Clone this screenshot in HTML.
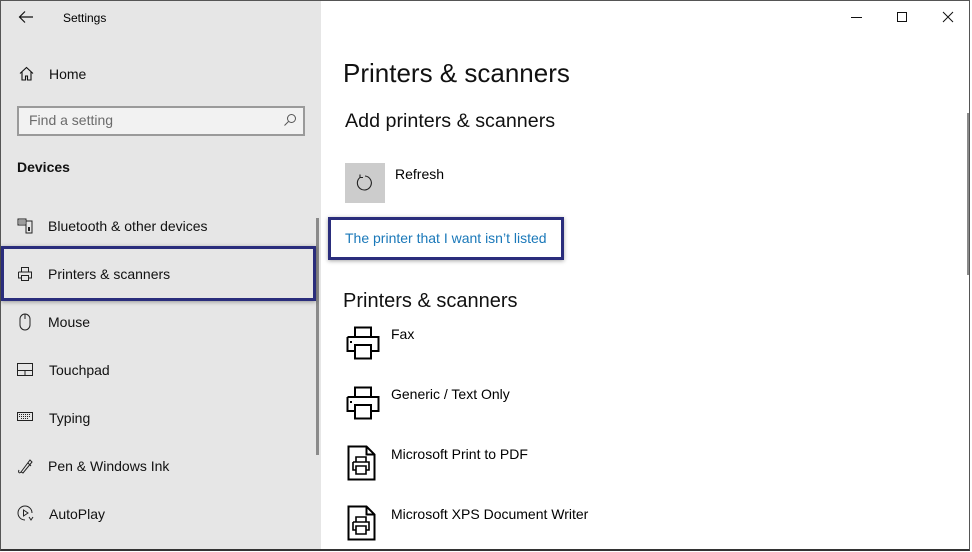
<!DOCTYPE html>
<html><head><style>
*{margin:0;padding:0;box-sizing:border-box}
body{width:972px;height:552px;overflow:hidden;background:#fff;font-family:"Liberation Sans",sans-serif;color:#000;position:relative}
.frame{position:absolute;left:0;top:0;width:970px;height:551px;border:1px solid #555;border-bottom:2px solid #333}
.side{position:absolute;left:1px;top:1px;width:320px;height:548px;background:#e6e6e6}
.t{position:absolute;white-space:nowrap}
.nav{font-size:14px;color:#111}
.box{position:absolute;border:3px solid #2a2d7c;box-shadow:0 1px 4px rgba(0,0,0,.35)}
svg{position:absolute}
</style></head><body>
<div class="side"></div>
<div class="frame"></div>
<svg style="left:18px;top:10px" width="16" height="14" viewBox="0 0 16 14"><path d="M15 7H2M7 1.5L1.5 7L7 12.5" stroke="#111" stroke-width="1.2" fill="none"/></svg>
<div class="t" style="left:63px;top:11px;font-size:12px">Settings</div>
<svg style="left:19px;top:66px" width="15" height="15" viewBox="0 0 15 15"><path d="M1 7.5L7.5 1.5L14 7.5M3 6v8h3.5v-4h2v4H12V6" stroke="#111" stroke-width="1.1" fill="none"/></svg>
<div class="t nav" style="left:49px;top:66px;font-size:14px">Home</div>
<div style="position:absolute;left:17px;top:106px;width:288px;height:30px;border:2px solid #9a9a9a;background:#f2f2f2"></div>
<div class="t" style="left:29px;top:112px;font-size:14px;color:#6b6b6b">Find a setting</div>
<svg style="left:283px;top:113px" width="14" height="14" viewBox="0 0 14 14"><circle cx="8.5" cy="5.5" r="4" stroke="#555" fill="none"/><path d="M5.5 8.5L1.5 12.5" stroke="#555"/></svg>
<div class="t" style="left:17px;top:159px;font-size:14px;font-weight:bold;color:#111">Devices</div>
<div style="position:absolute;left:316px;top:218px;width:3px;height:237px;background:#8a8a8a"></div>
<svg style="left:17px;top:218px" width="16" height="16" viewBox="0 0 16 16"><rect x="1" y="1" width="8" height="6" fill="none" stroke="#222"/><path d="M2 3h6M2 5h6" stroke="#222" stroke-width=".7"/><rect x="9" y="3" width="6" height="12" fill="none" stroke="#222"/><rect x="11" y="9" width="2" height="4" fill="#222"/></svg>
<div class="t nav" style="left:48px;top:218px">Bluetooth &amp; other devices</div>
<svg style="left:17px;top:266px" width="16" height="16" viewBox="0 0 16 16"><path d="M4.5 6V1.5h7V6M1.5 6h13v6h-3M4.5 12h-3V6M4.5 9.5h7v5h-7z" stroke="#222" fill="none"/></svg>
<div class="t nav" style="left:48px;top:266px">Printers &amp; scanners</div>
<div class="box" style="left:1px;top:246px;width:315px;height:55px"></div>
<svg style="left:18px;top:313px" width="14" height="18" viewBox="0 0 14 18"><rect x="2" y="1" width="10" height="16" rx="5" fill="none" stroke="#222"/><path d="M7 1v5" stroke="#222"/></svg>
<div class="t nav" style="left:48px;top:314px">Mouse</div>
<svg style="left:17px;top:363px" width="16" height="13" viewBox="0 0 16 13"><rect x=".5" y=".5" width="15" height="12" fill="none" stroke="#222"/><path d="M1 7.5h14M8 7.5v5" stroke="#222"/></svg>
<div class="t nav" style="left:49px;top:362px">Touchpad</div>
<svg style="left:17px;top:412px" width="16" height="9" viewBox="0 0 16 9"><rect x=".5" y=".5" width="15" height="8" fill="none" stroke="#222"/><path d="M2 2.5h12M2 4.5h12M4 6.5h8" stroke="#222" stroke-dasharray="1 1"/></svg>
<div class="t nav" style="left:49px;top:410px">Typing</div>
<svg style="left:17px;top:457px" width="17" height="18" viewBox="0 0 17 18"><path d="M4 15L13 3l2 2-9 11zM4 15c-2 2-3 0-2-2M11 6l3 3" stroke="#222" fill="none"/></svg>
<div class="t nav" style="left:48px;top:458px">Pen &amp; Windows Ink</div>
<svg style="left:17px;top:505px" width="17" height="17" viewBox="0 0 17 17"><path d="M8 15A7 7 0 1 1 15 8M12 12l2 3 2-3" stroke="#222" fill="none"/><path d="M6.5 5v6l4.5-3z" stroke="#222" fill="none"/></svg>
<div class="t nav" style="left:49px;top:506px">AutoPlay</div>
<div style="position:absolute;left:851px;top:17px;width:11px;height:1px;background:#111"></div>
<div style="position:absolute;left:897px;top:12px;width:10px;height:10px;border:1px solid #111"></div>
<svg style="left:942px;top:11px" width="12" height="12" viewBox="0 0 12 12"><path d="M1 1l10 10M11 1L1 11" stroke="#111"/></svg>
<div style="position:absolute;left:967px;top:113px;width:2px;height:162px;background:#8a8a8a"></div>
<div class="t" style="left:343px;top:58px;font-size:26px;color:#111">Printers &amp; scanners</div>
<div class="t" style="left:345px;top:110px;font-size:19.7px;color:#111">Add printers &amp; scanners</div>
<div style="position:absolute;left:345px;top:163px;width:40px;height:40px;background:#ccc"></div>
<svg style="left:356px;top:174px" width="18" height="18" viewBox="0 0 18 18"><path d="M4 3.5A7 7 0 1 0 9 2" stroke="#222" fill="none" stroke-width="1.1"/><path d="M4 3.5V0.5M4 3.5h3" stroke="#222" stroke-width="1.1"/></svg>
<div class="t" style="left:395px;top:166px;font-size:14px">Refresh</div>
<div class="box" style="left:328px;top:217px;width:236px;height:43px;background:#fff"></div>
<div class="t" style="left:345px;top:230px;font-size:14px;color:#1a78b9">The printer that I want isn’t listed</div>
<div class="t" style="left:343px;top:290px;font-size:20px;color:#111">Printers &amp; scanners</div>
<svg style="left:346px;top:326px" width="34" height="34" viewBox="0 0 34 34"><path d="M9 11V1.5h16V11M1.5 11h31v14h-7.5M9 25H1.5V11M9 19h16v13.5H9z" stroke="#000" stroke-width="2" fill="none"/><rect x="4" y="15" width="2" height="2"/></svg>
<div class="t" style="left:391px;top:326px;font-size:14px">Fax</div>
<svg style="left:346px;top:386px" width="34" height="34" viewBox="0 0 34 34"><path d="M9 11V1.5h16V11M1.5 11h31v14h-7.5M9 25H1.5V11M9 19h16v13.5H9z" stroke="#000" stroke-width="2" fill="none"/><rect x="4" y="15" width="2" height="2"/></svg>
<div class="t" style="left:391px;top:386px;font-size:14px">Generic / Text Only</div>
<svg style="left:347px;top:445px" width="30" height="36" viewBox="0 0 30 36"><path d="M1.5 1.5h18l8 8v25h-26z M19.5 1.5v8h8" stroke="#000" stroke-width="2" fill="none"/><path d="M9 17v-5h10v5M6 17h16v8h-3M9 25H6v-8M9 21h10v8H9z" stroke="#000" stroke-width="1.6" fill="none"/></svg>
<div class="t" style="left:391px;top:446px;font-size:14px">Microsoft Print to PDF</div>
<svg style="left:347px;top:505px" width="30" height="36" viewBox="0 0 30 36"><path d="M1.5 1.5h18l8 8v25h-26z M19.5 1.5v8h8" stroke="#000" stroke-width="2" fill="none"/><path d="M9 17v-5h10v5M6 17h16v8h-3M9 25H6v-8M9 21h10v8H9z" stroke="#000" stroke-width="1.6" fill="none"/></svg>
<div class="t" style="left:391px;top:506px;font-size:14px">Microsoft XPS Document Writer</div>
</body></html>
